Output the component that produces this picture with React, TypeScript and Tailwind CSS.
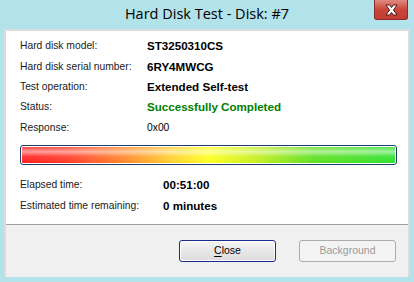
import React from 'react'

const rows = [
  { label: 'Hard disk model:', value: 'ST3250310CS', cls: 'font-bold text-black text-[11.6px]' },
  { label: 'Hard disk serial number:', value: '6RY4MWCG', cls: 'font-bold text-black text-[11.6px]' },
  { label: 'Test operation:', value: 'Extended Self-test', cls: 'font-bold text-black text-[11.6px]' },
  { label: 'Status:', value: 'Successfully Completed', cls: 'font-bold text-[#008000] text-[11.6px]' },
  { label: 'Response:', value: '0x00', cls: 'text-black' },
]

function CloseX() {
  return (
    <div className="h-[20px] w-[34px] rounded-b-[3px] border border-t-0 border-[#8a2a2a] bg-gradient-to-b from-[#e08a80] via-[#c8463a] to-[#c43c30] flex items-center justify-center">
      <svg width="15" height="12" viewBox="0 0 15 12">
        <path
          d="M2 1 L5.5 1 L7.5 3.6 L9.5 1 L13 1 L9.4 6 L13 11 L9.5 11 L7.5 8.4 L5.5 11 L2 11 L5.6 6 Z"
          fill="#ffffff"
          stroke="#3a1010"
          strokeWidth="0.9"
          strokeLinejoin="round"
        />
      </svg>
    </div>
  )
}

export default function App() {
  return (
    <div
      className="w-[414px] h-[282px] bg-[#b2e2ea] flex flex-col overflow-hidden"
      style={{ fontFamily: '"Liberation Sans", Arial, sans-serif' }}
    >
      {/* Title bar */}
      <div className="relative h-[29px] flex items-center justify-center">
        <span className="text-[14.5px] text-black leading-none" style={{ fontFamily: '"Open Sans", sans-serif' }}>
          Hard Disk Test - Disk: #7
        </span>
        <div className="absolute right-[6px] top-0">
          <CloseX />
        </div>
      </div>

      {/* Client area */}
      <div className="mx-[4px] w-[406px] h-[248px] border-[2px] border-b-0 border-[#dcdcdc] flex flex-col">
        <div className="bg-white h-[193px] flex flex-col pl-[14px] pt-[5px] text-[10.3px]">
          {rows.map((r) => (
            <div key={r.label} className="h-[20.3px] flex items-center">
              <span className="w-[127px] text-[#1a1a1a]">{r.label}</span>
              <span className={r.cls}>{r.value}</span>
            </div>
          ))}

          <div className="mt-[8px] w-[377px] h-[20px] rounded-[3px] border border-[#1f3d68] p-[1px]">
            <div className="relative h-full w-full rounded-[1px] bg-[linear-gradient(to_right,#ff2020_0%,#ff3a2a_12%,#ff8a2a_28%,#ffd030_40%,#ffff20_50%,#c8f020_62%,#60e020_78%,#30e030_100%)] overflow-hidden">
              <div className="absolute inset-0 bg-[linear-gradient(to_bottom,rgba(255,255,255,0.15)_0%,rgba(255,255,255,0.55)_30%,rgba(255,255,255,0.1)_60%,rgba(255,255,255,0)_100%)]" />
            </div>
          </div>

          <div className="mt-[9px] flex flex-col">
            <div className="h-[20.5px] flex items-center">
              <span className="w-[143px] text-[#1a1a1a]">Elapsed time:</span>
              <span className="font-bold text-black text-[11.6px]">00:51:00</span>
            </div>
            <div className="h-[20.5px] flex items-center">
              <span className="w-[143px] text-[#1a1a1a]">Estimated time remaining:</span>
              <span className="font-bold text-black text-[11.6px]">0 minutes</span>
            </div>
          </div>
        </div>

        <div className="h-px bg-[#a0a0a0]" />

        <div className="flex-1 bg-[#f0f0f0] flex justify-end items-start pt-[15px] pr-[12px] gap-[23px] text-[10.5px]">
          <button className="w-[97px] h-[22px] rounded-[3px] border border-[#1b2b8a] bg-gradient-to-b from-[#f4f4f4] to-[#dcdcdc] text-black shadow-[inset_0_0_0_1px_#ffffff]">
            <span className="underline underline-offset-2">C</span>lose
          </button>
          <button
            disabled
            className="w-[97px] h-[22px] rounded-[3px] border border-[#adadad] bg-[#f4f4f4] text-[#9a9a9a]"
          >
            Background
          </button>
        </div>
      </div>
    </div>
  )
}
